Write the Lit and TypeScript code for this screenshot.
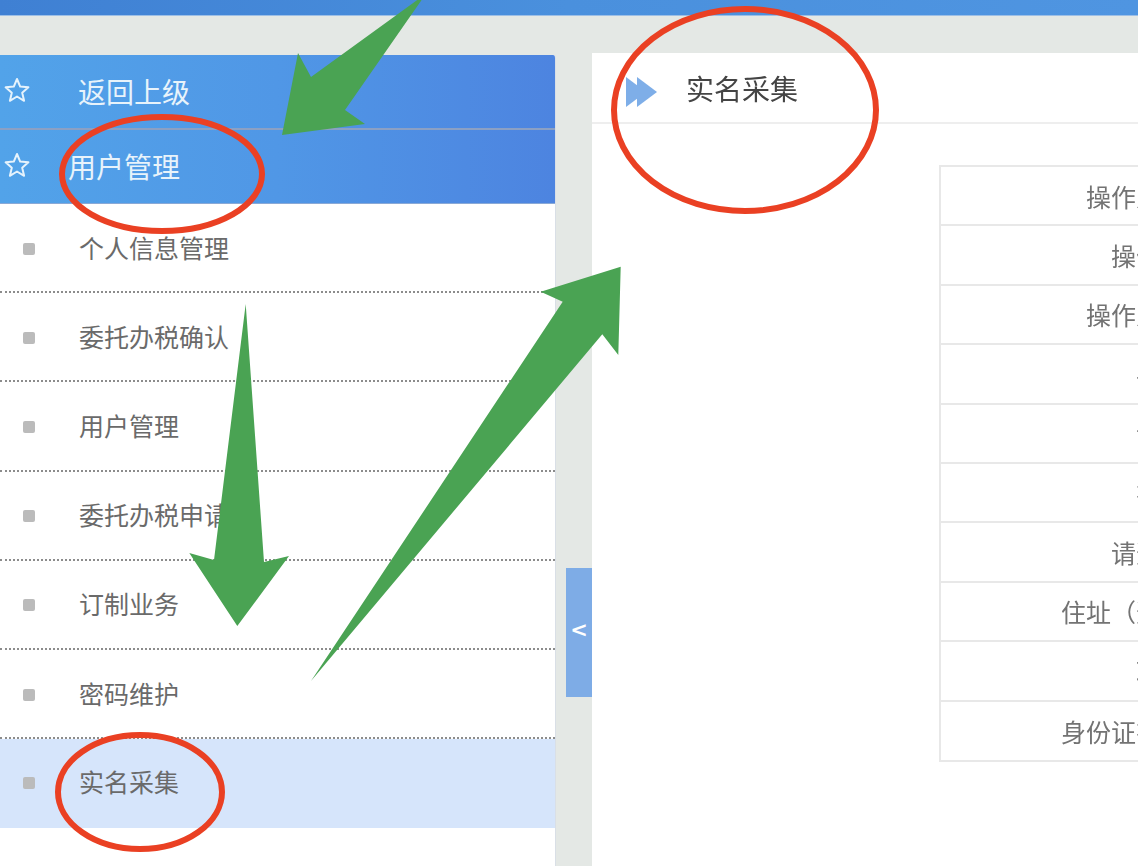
import { LitElement, html, css, svg } from "lit";
import { customElement } from "lit/decorators.js";

const MENU = ["个人信息管理", "委托办税确认", "用户管理", "委托办税申请", "订制业务", "密码维护", "实名采集"];
const ROWS = [
  "操作人姓名：", "操作类型：", "操作人手机：", "手机号：", "证件号：", "有效期：",
  "请选民族：", "住址（选填）：", "联系人：", "身份证有效期：",
];

const star = html`<svg class="star" viewBox="0 0 26 26" width="26" height="26">
  <polygon points="13,2 16.2,9.6 24.4,10.3 18.2,15.7 20.1,23.8 13,19.5 5.9,23.8 7.8,15.7 1.6,10.3 9.8,9.6"
    fill="none" stroke="#e6f3fc" stroke-width="2" stroke-linejoin="round" />
</svg>`;

@customElement("app-root")
export class AppRoot extends LitElement {
  static styles = css`
    :host {
      display: block;
      width: 1138px;
      height: 866px;
      position: relative;
      overflow: hidden;
      background: #e4e8e5;
      font-family: "Liberation Sans", "Noto Sans CJK SC", sans-serif;
      text-spacing-trim: space-all;
    }
    .topbar {
      height: 16px;
      background: linear-gradient(90deg, #3f80d3 0%, #4a90dd 50%, #4f95e1 100%);
      border-bottom: 1px solid #9dbfe6;
      box-sizing: border-box;
    }
    .body {
      display: flex;
      align-items: stretch;
      height: 850px;
      filter: blur(0.45px);
    }
    .side {
      width: 556px;
      flex: none;
      margin-top: 39px;
      background: #fff;
      border-right: 1px solid #d9dfe6;
      box-sizing: border-box;
      border-top-right-radius: 3px;
      overflow: hidden;
    }
    .head {
      display: flex;
      align-items: center;
      background: linear-gradient(90deg, #52a3e9 0%, #5097e6 50%, #4d84e0 100%);
      color: #e8f3fb;
      font-size: 28px;
      box-sizing: border-box;
    }
    .head.first {
      height: 75px;
      border-bottom: 2px solid #8ba0c4;
    }
    .head.second {
      height: 74px;
      border-bottom: 1px solid #8aa9d6;
    }
    .star {
      margin-left: 4px;
      flex: none;
      margin-top: -3px;
    }
    .head .label {
      margin-top: -2px;
    }
    .head.first .label {
      margin-left: 48px;
    }
    .head.second .label {
      margin-left: 38px;
    }
    .item {
      height: 89.2px;
      box-sizing: border-box;
      display: flex;
      align-items: center;
      padding-bottom: 2px;
      color: #6a6a6a;
      font-size: 25px;
      border-bottom: 2px dotted #8c8c8c;
    }
    .item.active {
      background: #d6e5fb;
      border-bottom: none;
      padding-bottom: 5px;
    }
    .bullet {
      width: 12px;
      height: 12px;
      margin-left: 23px;
      margin-right: 44px;
      margin-top: 4px;
      background: #bbbbbb;
      border-radius: 2px;
      flex: none;
    }
    .gutter {
      width: 36px;
      flex: none;
      display: flex;
      align-items: flex-start;
      justify-content: flex-end;
    }
    .toggle {
      width: 26px;
      height: 129px;
      margin-top: 552px;
      padding-bottom: 6px;
      box-sizing: border-box;
      background: #7eace6;
      color: #fff;
      display: flex;
      align-items: center;
      justify-content: center;
      font-family: "DejaVu Sans", sans-serif;
      font-size: 21px;
      font-weight: 700;
    }
    .main {
      flex: 1;
      min-width: 0;
      margin-top: 37px;
      background: #fff;
      overflow: hidden;
    }
    .title {
      height: 69px;
      display: flex;
      align-items: center;
      gap: 29px;
      padding-left: 34px;
      border-bottom: 2px solid #eeeeee;
      color: #444;
      font-size: 28px;
    }
    .title svg {
      margin-top: 9px;
    }
    .table {
      margin: 41px 0 0 347px;
      width: 700px;
      border: 2px solid #e8e8e8;
      border-right: none;
      box-sizing: border-box;
    }
    .row {
      height: 59.4px;
      box-sizing: border-box;
      display: flex;
      align-items: center;
      border-bottom: 2px solid #e8e8e8;
      color: #737373;
      font-size: 25px;
    }
    .row:last-child {
      border-bottom: none;
      height: 58px;
    }
    .row .cell {
      width: 295px;
      flex: none;
      text-align: right;
      white-space: nowrap;
    }
    .marks {
      position: absolute;
      inset: 0;
      width: 1138px;
      height: 866px;
      pointer-events: none;
    }
  `;

  render() {
    return html`
      <div class="topbar"></div>
      <div class="body">
        <nav class="side">
          <div class="head first">${star}<span class="label">返回上级</span></div>
          <div class="head second">${star}<span class="label">用户管理</span></div>
          ${MENU.map(
            (m, i) => html`<div class="item ${i === MENU.length - 1 ? "active" : ""}">
              <span class="bullet"></span><span>${m}</span>
            </div>`
          )}
        </nav>
        <div class="gutter"><div class="toggle">&lt;</div></div>
        <section class="main">
          <div class="title">
            <svg width="31" height="30" viewBox="0 0 31 30">
              <polygon points="0,0 20,15 0,30" fill="#7eaee8" />
              <polygon points="11,0 31,15 11,30" fill="#7eaee8" />
            </svg>
            <span>实名采集</span>
          </div>
          <div class="table">
            ${ROWS.map((r) => html`<div class="row"><div class="cell">${r}</div></div>`)}
          </div>
        </section>
      </div>
      <svg class="marks" viewBox="0 0 1138 866">
        ${svg`
          <polygon fill="#4aa353" points="423,-2 345,110 365,124 282,135 298,53 311,77 420,-2" />
          <polygon fill="#4aa353" points="245.7,304 264,562 289,556 237.3,626 189.3,553 214,560" />
          <polygon fill="#4aa353" points="311,681 562.7,301.7 540.7,291.7 620.7,266.7 618.3,355 602.3,334.3" />
          <g fill="none" stroke="#ea4023" stroke-width="6">
            <ellipse cx="162" cy="174" rx="100" ry="57" />
            <ellipse cx="745" cy="110" rx="131" ry="101" />
            <ellipse cx="140" cy="792" rx="82" ry="57" />
          </g>
        `}
      </svg>
    `;
  }
}
